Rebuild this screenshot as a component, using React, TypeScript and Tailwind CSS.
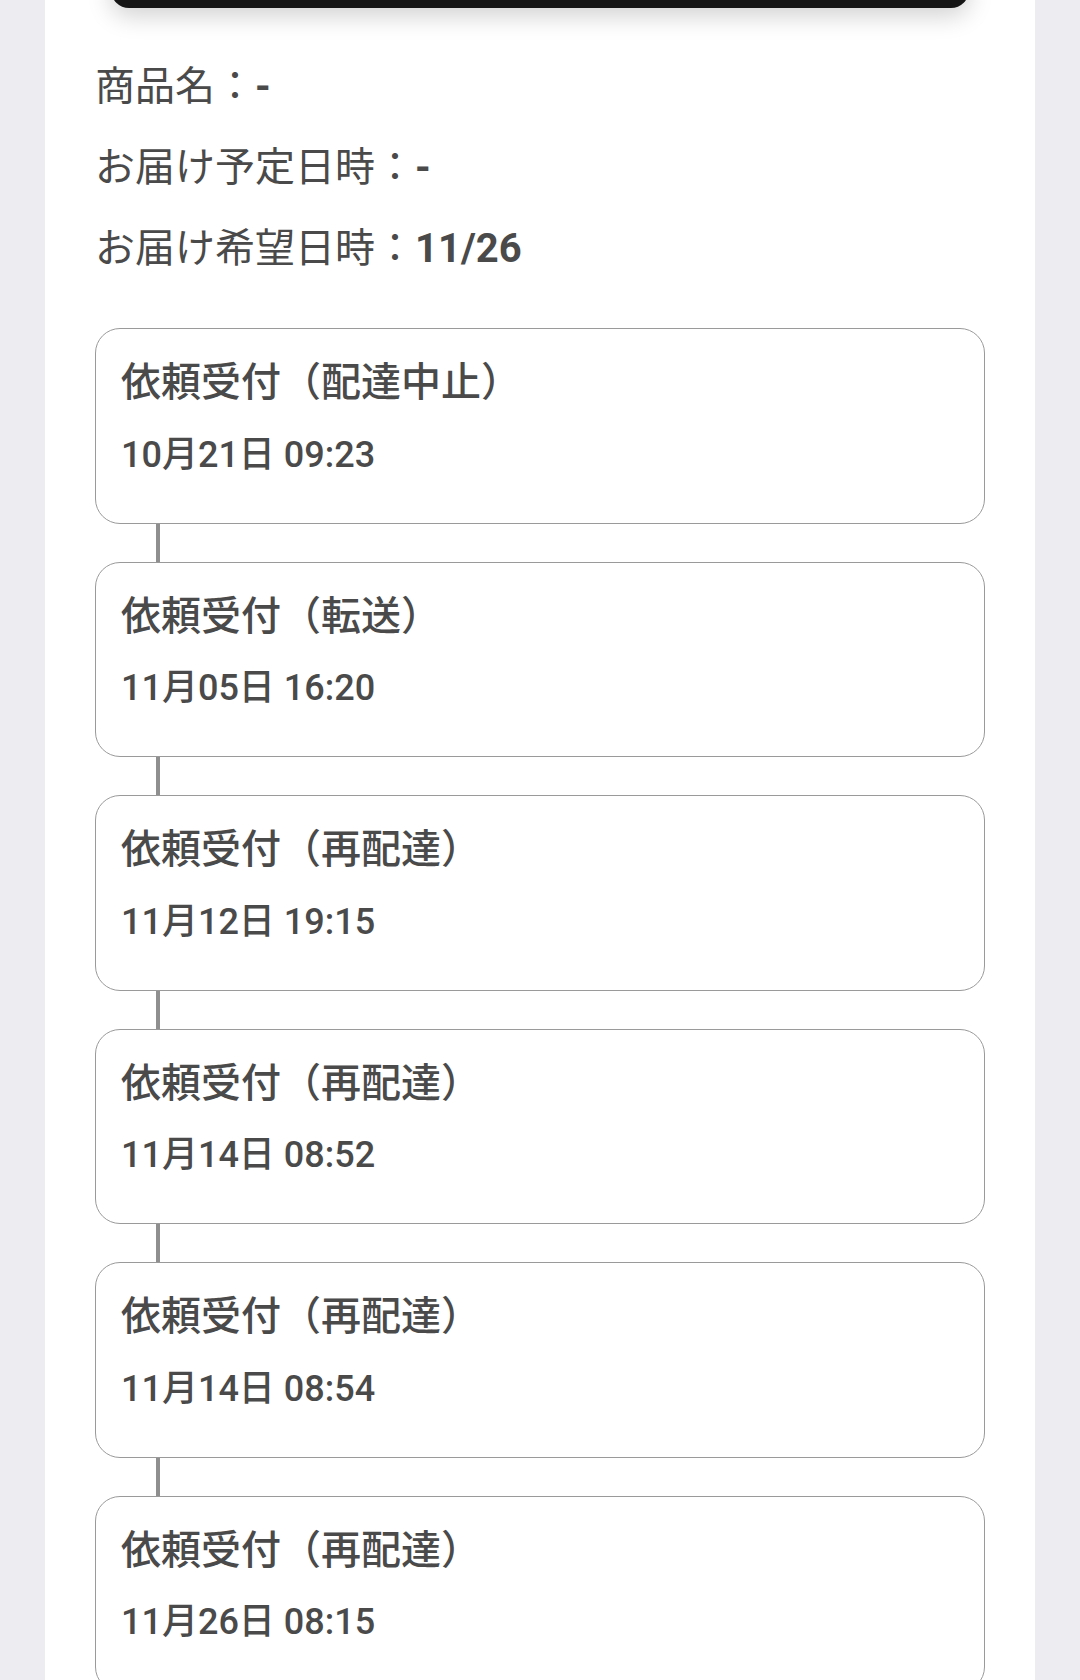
import React from "react";

const events = [
  { title: "依頼受付（配達中止）", date: "10月21日 09:23" },
  { title: "依頼受付（転送）", date: "11月05日 16:20" },
  { title: "依頼受付（再配達）", date: "11月12日 19:15" },
  { title: "依頼受付（再配達）", date: "11月14日 08:52" },
  { title: "依頼受付（再配達）", date: "11月14日 08:54" },
  { title: "依頼受付（再配達）", date: "11月26日 08:15" },
];

const font = { fontFamily: "Roboto, 'Noto Sans CJK JP', sans-serif" };

export default function App() {
  return (
    <div
      className="h-[1680px] w-[1080px] overflow-hidden bg-[#ececf1] text-[#4a4a4a]"
      style={font}
    >
      <div className="mx-[45px] flex h-full flex-col bg-white">
        <div className="mx-[66px] -mt-[52px] h-[60px] shrink-0 rounded-[18px] bg-[#161616] shadow-[0_8px_24px_rgba(0,0,0,0.18)]" />
        <div className="mt-[38px] flex shrink-0 flex-col px-[50px] text-[40px]">
          <div className="flex h-[81px] items-center">
            <span>商品名：</span>
            <span className="font-bold">-</span>
          </div>
          <div className="flex h-[81px] items-center">
            <span>お届け予定日時：</span>
            <span className="font-bold">-</span>
          </div>
          <div className="flex h-[81px] items-center">
            <span>お届け希望日時：</span>
            <span className="font-bold">11/26</span>
          </div>
        </div>
        <div className="mt-[39px] flex shrink-0 flex-col px-[50px]">
          {events.map((e, i) => (
            <React.Fragment key={i}>
              {i > 0 && (
                <div className="ml-[61px] h-[38px] w-[4px] shrink-0 bg-[#8f8f8f]" />
              )}
              <div className="h-[195.6px] shrink-0 rounded-[25px] border border-[#9a9a9a] px-[25px] pt-[30px]">
                <div className="h-[48px] text-[40px] font-medium leading-[48px]">
                  {e.title}
                </div>
                <div className="mt-[27.5px] h-[40px] text-[36px] font-medium leading-[40px]">
                  {e.date}
                </div>
              </div>
            </React.Fragment>
          ))}
        </div>
      </div>
    </div>
  );
}
